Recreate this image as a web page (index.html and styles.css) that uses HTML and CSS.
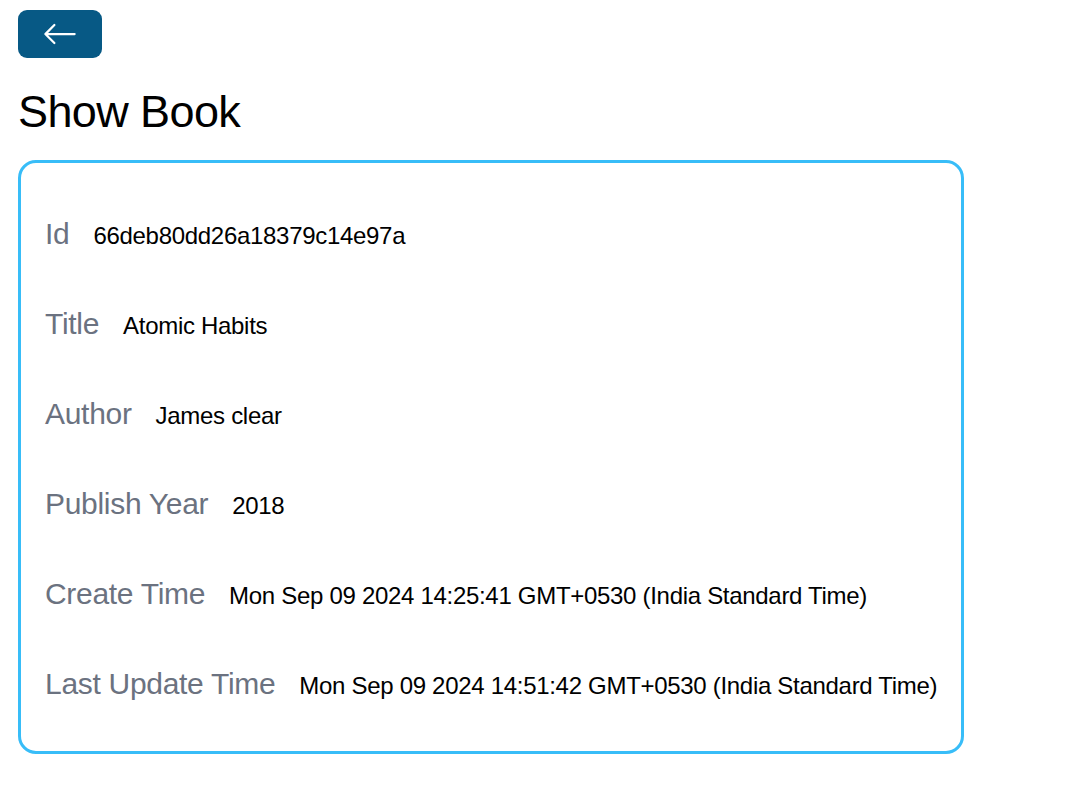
FILE: index.html
```html
<!DOCTYPE html>
<html lang="en">
<head>
<meta charset="utf-8">
<title>Show Book</title>
<link rel="stylesheet" href="styles.css">
</head>
<body>
<div class="page">
  <div class="top">
    <a class="back" href="#" aria-label="Back">
      <svg class="back-icon" viewBox="0 0 16 16" width="36" height="36" fill="currentColor"><path fill-rule="evenodd" d="M15 8a.5.5 0 0 0-.5-.5H2.707l3.147-3.146a.5.5 0 1 0-.708-.708l-4 4a.5.5 0 0 0 0 .708l4 4a.5.5 0 0 0 .708-.708L2.707 8.5H14.5A.5.5 0 0 0 15 8z"/></svg>
    </a>
  </div>
  <h1 class="title">Show Book</h1>
  <div class="card">
    <div class="row"><span class="label">Id</span><span class="value">66deb80dd26a18379c14e97a</span></div>
    <div class="row"><span class="label">Title</span><span class="value">Atomic Habits</span></div>
    <div class="row"><span class="label">Author</span><span class="value">James clear</span></div>
    <div class="row"><span class="label">Publish Year</span><span class="value">2018</span></div>
    <div class="row"><span class="label">Create Time</span><span class="value">Mon Sep 09 2024 14:25:41 GMT+0530 (India Standard Time)</span></div>
    <div class="row"><span class="label">Last Update Time</span><span class="value">Mon Sep 09 2024 14:51:42 GMT+0530 (India Standard Time)</span></div>
  </div>
</div>
</body>
</html>
```
FILE: styles.css
```css
html, body {
  margin: 0;
  padding: 0;
  background: #ffffff;
}
body {
  font-family: "Liberation Sans", Arial, sans-serif;
  font-size: 24px;
  line-height: 1.5;
  color: #000000;
}
.page {
  padding: 10px 18px;
}
.top {
  display: flex;
}
.back {
  display: flex;
  align-items: center;
  justify-content: center;
  background: #075985;
  color: #ffffff;
  padding: 6px 24px;
  border-radius: 9px;
  text-decoration: none;
}
.back-icon {
  display: block;
  width: 36px;
  height: 36px;
}
.title {
  margin: 27px 0 21px;
  font-size: 45px;
  line-height: 54px;
  font-weight: 400;
  letter-spacing: -0.6px;
}
.card {
  display: flex;
  flex-direction: column;
  box-sizing: border-box;
  width: 946px;
  border: 3px solid #38bdf8;
  border-radius: 18px;
  padding: 26px 24px 22px;
}
.row {
  margin: 24px 0;
  white-space: nowrap;
}
.label {
  font-size: 30px;
  line-height: 42px;
  color: #6b7280;
  margin-right: 24px;
  letter-spacing: -0.3px;
}
.value {
  font-size: 24px;
  letter-spacing: -0.3px;
}
```
